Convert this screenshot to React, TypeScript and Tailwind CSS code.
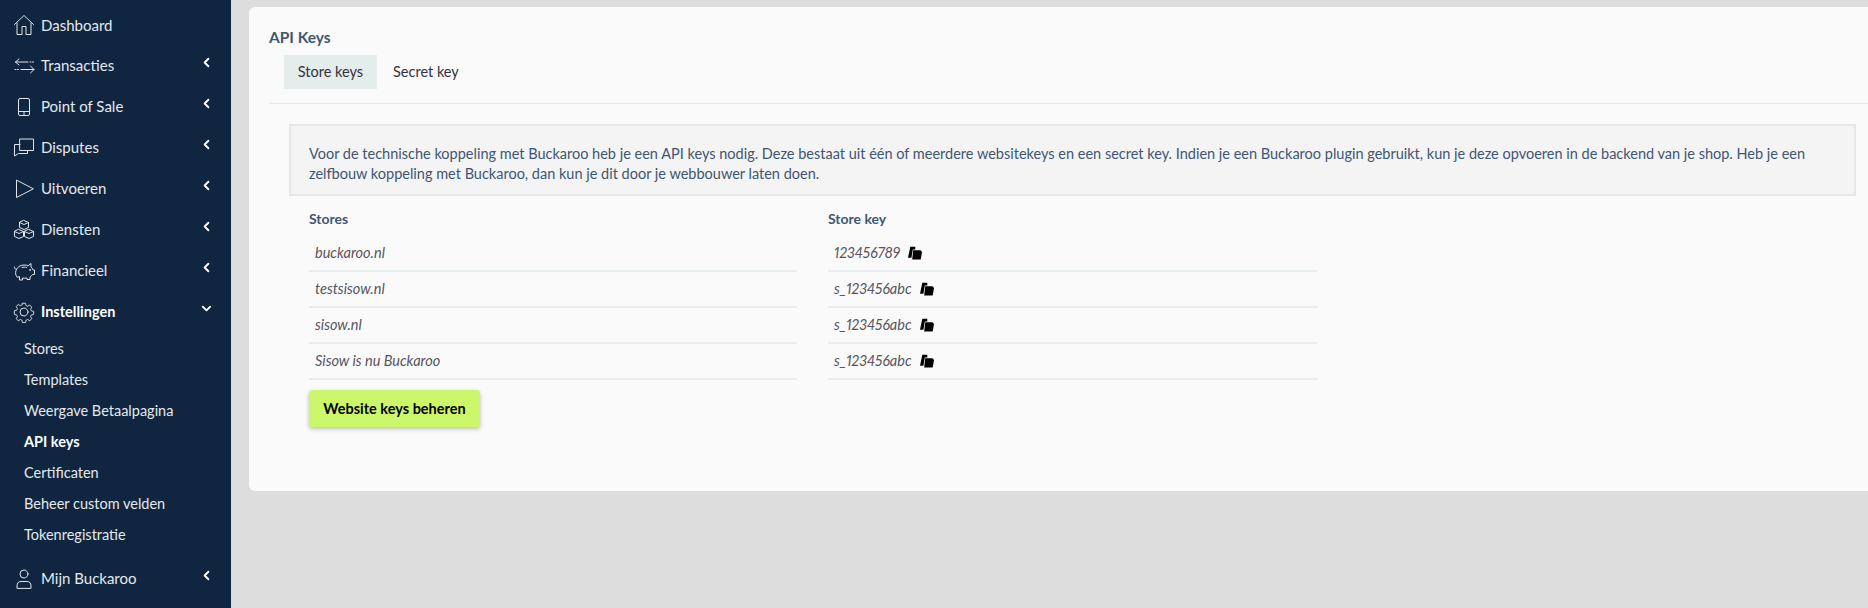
import { ChevronDown, ChevronLeft } from 'lucide-react'
import type { ReactNode } from 'react'

const Icon = ({ children }: { children: ReactNode }) => (
  <svg width="22" height="22" viewBox="0 0 22 22" fill="none" stroke="#dfe5ea" strokeWidth="1" strokeLinecap="round" strokeLinejoin="round">
    {children}
  </svg>
)

const icons: Record<string, ReactNode> = {
  home: <path d="M1.500 10.500 11 1.500l9.500 9M4 9v11.500h5v-8h4v8h5V9" />,
  trans: (
    <>
      <path d="M6 4 2.500 7 6 10M2.500 7H15" />
      <path d="M17 7h4" strokeDasharray="1 1.500" />
      <path d="M17.500 11 21 14.500 17.500 18M21 14.500H8" />
      <path d="M2 14.500h4" strokeDasharray="1 1.500" />
    </>
  ),
  pos: (
    <>
      <rect x="5.500" y="2.500" width="11" height="17" rx="1.500" />
      <path d="M5.500 15.500h11M11 15.500v4" />
    </>
  ),
  chat: (
    <>
      <path d="M7 2h13.500v11.500H9l-2 0z" />
      <path d="M7 7.500H1.500V19l4-2.500h9v-3" />
    </>
  ),
  play: <path d="M3.500 2.500v17L20 11z" />,
  boxes: (
    <>
      <path d="M11 1.500l4.500 2v5l-4.500 2-4.500-2v-5zM6.500 3.500l4.500 2 4.500-2" />
      <path d="M6 10.500l4.500 2v5l-4.500 2-4.500-2v-5zM1.500 12.500l4.500 2 4.500-2" />
      <path d="M16 10.500l4.500 2v5l-4.500 2-4.500-2v-5zM11.500 12.500l4.500 2 4.500-2" />
    </>
  ),
  piggy: (
    <>
      <path d="M3 9c-1 0-2-.5-1.500-2M4 17c-1.500-2-1.800-4-1-6.500C4 7.500 7 5 11 5c1.500 0 3 .3 4 .8L18 3.500v3.500c1 .8 1.500 1.600 2 3h1.500v4.500h-2c-.6 1-1.300 1.700-2.500 2.500v2.500h-3v-1.500c-1.500.3-3 .3-4.500 0V20H6.500v-3z" />
      <path d="M9 7.500c1.500-.5 3-.5 4.500 0" />
      <circle cx="17" cy="10" r=".4" />
    </>
  ),
  gear: (
    <>
      <circle cx="11" cy="11" r="4" />
      <path d="M9.300 1.300h3.400l.6 2.600 1.800.8 2.300-1.400 2.300 2.300-1.400 2.300.8 1.800 2.600.6v3.400l-2.600.6-.8 1.800 1.400 2.300-2.300 2.300-2.300-1.400-1.800.8-.6 2.600H9.300l-.6-2.600-1.800-.8-2.300 1.400-2.300-2.300 1.400-2.300-.8-1.800-2.600-.6V9.600l2.600-.6.8-1.800-1.400-2.300 2.300-2.300 2.300 1.400 1.800-.8z" transform="translate(1.100 1.100) scale(.9)" />
    </>
  ),
  user: (
    <>
      <circle cx="11" cy="6" r="4" />
      <path d="M4 20v-2c0-3 1.500-4.500 4-4.500h6c2.500 0 4 1.500 4 4.500v2z" />
    </>
  ),
}

const NavRow = ({ icon, label, arrow = true, active = false, h = 'h-[41px]' }: { icon: string; label: string; arrow?: boolean; active?: boolean; h?: string }) => (
  <div className={`flex items-center pl-[13px] ${h}`}>
    <span className="flex w-[22px] justify-center">
      <Icon>{icons[icon]}</Icon>
    </span>
    <span className={`ml-[6px] ${active ? 'text-[14.5px] font-bold text-white' : 'text-[15px] text-[#e4e9ee]'}`}>{label}</span>
    {arrow && (
      <span className="ml-auto mr-[17px] -translate-y-[3px] text-white">
        {active ? <ChevronDown size={15} strokeWidth={3} /> : <ChevronLeft size={15} strokeWidth={3} />}
      </span>
    )}
  </div>
)

const subItems = ['Stores', 'Templates', 'Weergave Betaalpagina', 'API keys', 'Certificaten', 'Beheer custom velden', 'Tokenregistratie']

const CopyIcon = () => (
  <svg width="14" height="14" viewBox="0 0 14 14" fill="#000">
    <path d="M2.300 0.700h5v2.800H4.800L3.400 11.800H0z" />
    <path d="M5.200 4.300h7.300l1.500 1.700-1.300 7.600H4.200z" />
  </svg>
)

const rows = [
  ['buckaroo.nl', '123456789'],
  ['testsisow.nl', 's_123456abc'],
  ['sisow.nl', 's_123456abc'],
  ['Sisow is nu Buckaroo', 's_123456abc'],
]

export default function App() {
  return (
    <div className="flex h-[608px] overflow-hidden bg-[#dddddd] font-['Lato',sans-serif]">
      <aside className="flex w-[231px] flex-none flex-col bg-[#10253f] pt-[5px]">
        <NavRow icon="home" label="Dashboard" arrow={false} h="h-[40px]" />
        <NavRow icon="trans" label="Transacties" />
        <NavRow icon="pos" label="Point of Sale" />
        <NavRow icon="chat" label="Disputes" />
        <NavRow icon="play" label="Uitvoeren" />
        <NavRow icon="boxes" label="Diensten" />
        <NavRow icon="piggy" label="Financieel" />
        <NavRow icon="gear" label="Instellingen" active />
        <ul className="mt-[1px] pl-6">
          {subItems.map((s) => (
            <li key={s} className={`flex h-[31px] items-center text-[14.5px] ${s === 'API keys' ? 'font-bold text-white' : 'text-[#e4e9ee]'}`}>
              {s}
            </li>
          ))}
        </ul>
        <div className="mt-[8px]">
          <NavRow icon="user" label="Mijn Buckaroo" />
        </div>
      </aside>

      <main className="min-w-0 flex-1 pl-[18px] pt-[7px]">
        <section className="h-[484px] rounded-l-[6px] bg-[#fafafa] pl-5 pt-[19px]">
          <h1 className="text-[15.5px] font-bold leading-[22px] text-[#3f5672]">API Keys</h1>
          <div className="mt-[7px] flex pl-[15px]">
            <div className="flex h-[34px] w-[93px] items-center justify-center bg-[#e5ecec] text-[14.5px] text-[#33333a]">Store keys</div>
            <div className="flex h-[34px] items-center px-4 text-[14.5px] text-[#33333a]">Secret key</div>
          </div>
          <div className="mt-[14px] border-t border-[#e8e8e8]" />

          <div className="ml-5 mr-[12px] mt-5 border-2 border-[#e6e6e6] bg-[#f4f4f4] px-[18px] pb-[10px] pt-[18px] text-[14.5px] leading-5 text-[#3f5672]">
            Voor de technische koppeling met Buckaroo heb je een API keys nodig. Deze bestaat uit één of meerdere websitekeys en een secret key. Indien je een Buckaroo plugin gebruikt, kun je deze opvoeren in de backend van je shop. Heb je een zelfbouw koppeling met Buckaroo, dan kun je dit door je webbouwer laten doen.
          </div>

          <div className="ml-10 mt-[5px] grid w-[1009px] grid-cols-[488px_490px] gap-x-[31px]">
            <div className="flex h-[35px] items-center text-sm font-bold text-[#3f5672]">Stores</div>
            <div className="flex h-[35px] items-center text-sm font-bold text-[#3f5672]">Store key</div>
            {rows.map(([store, key]) => (
              <div key={store} className="contents">
                <div className="flex h-9 items-center border-b-2 border-[#e8eeee] pl-[6px] text-[14.5px] italic text-[#55555f]">{store}</div>
                <div className="flex h-9 items-center gap-2 border-b-2 border-[#e8eeee] pl-[6px] text-[14.5px] italic text-[#55555f]">
                  <span className="proportional-nums">{key}</span>
                  <CopyIcon />
                </div>
              </div>
            ))}
          </div>

          <button className="ml-10 mt-[10px] h-[37px] w-[171px] rounded-[3px] bg-[#cdf76a] text-[14.5px] font-bold text-black shadow-[0_2px_4px_rgba(0,0,0,0.25)]">
            Website keys beheren
          </button>
        </section>
      </main>
    </div>
  )
}
